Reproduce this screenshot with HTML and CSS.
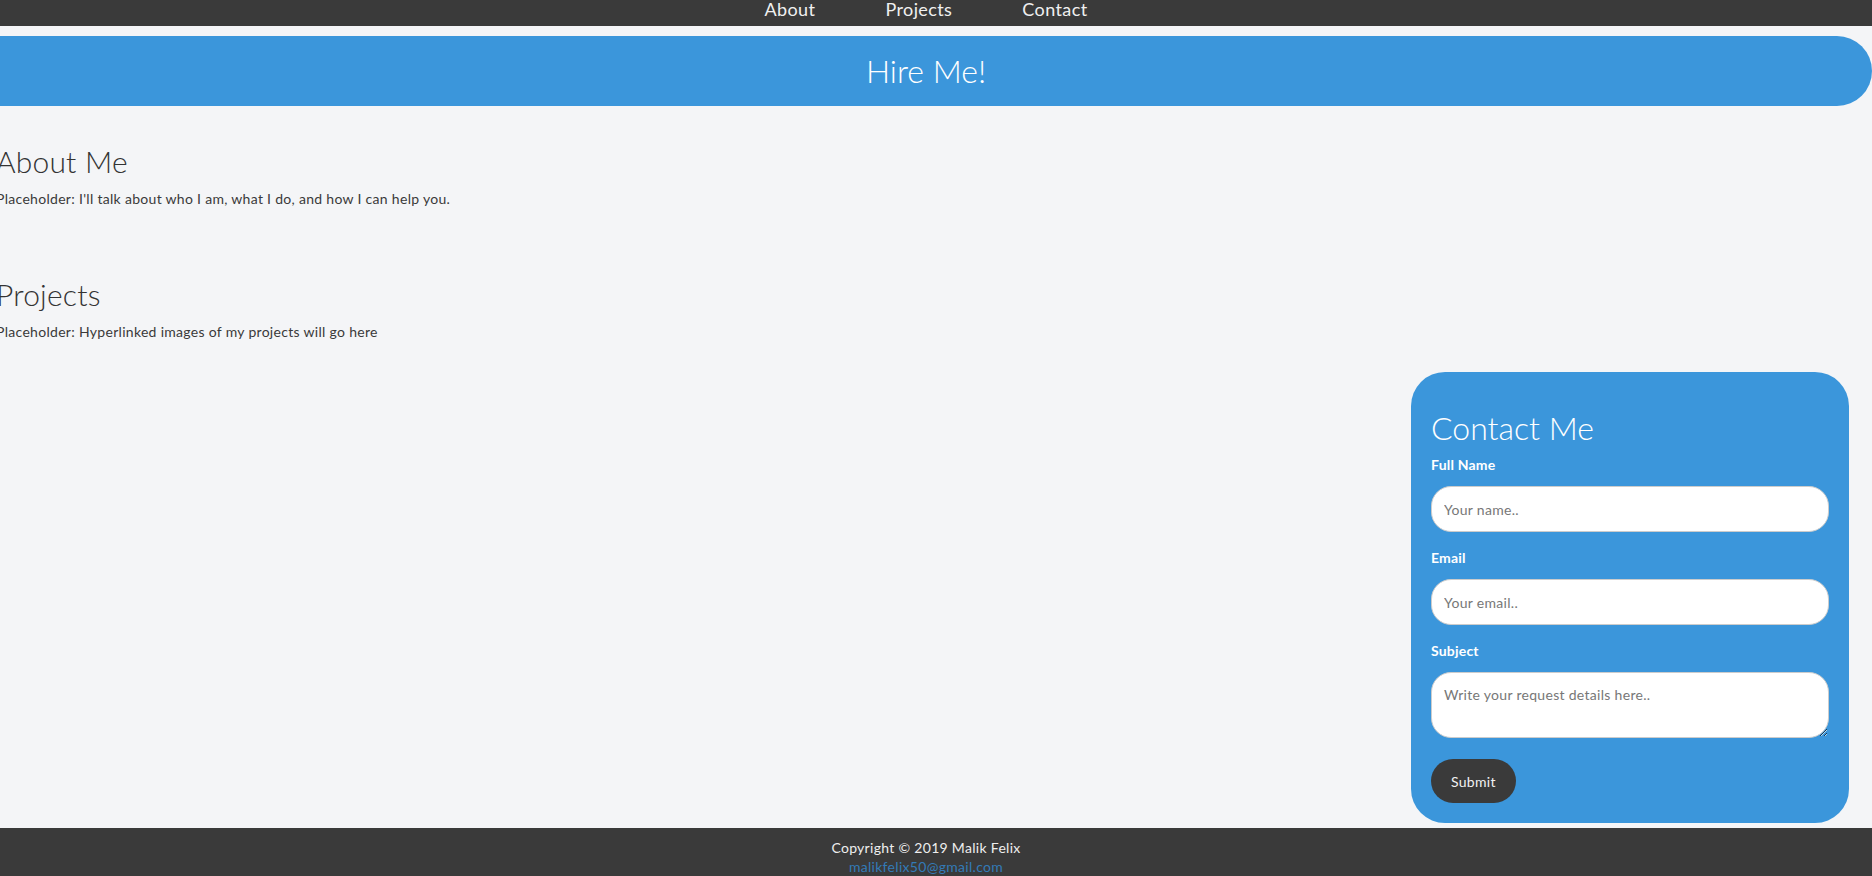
FILE: index.html
```html
<!DOCTYPE html>
<html lang="en">
<head>
<meta charset="utf-8">
<title>Malik Felix</title>
<link rel="stylesheet" href="styles.css">
</head>
<body>
<div class="page">
  <nav class="topnav">
    <a class="navlink" href="#about">About</a>
    <a class="navlink" href="#projects">Projects</a>
    <a class="navlink" href="#contact">Contact</a>
  </nav>
  <header class="hero">Hire Me!</header>
  <section class="section section-about" id="about">
    <h2 class="section-title">About Me</h2>
    <p class="section-text">Placeholder: I'll talk about who I am, what I do, and how I can help you.</p>
  </section>
  <section class="section section-projects" id="projects">
    <h2 class="section-title">Projects</h2>
    <p class="section-text">Placeholder: Hyperlinked images of my projects will go here</p>
  </section>
  <div class="contact-row" id="contact">
    <form class="contact-card">
      <h2 class="contact-title">Contact Me</h2>
      <label class="field-label" for="fname">Full Name</label>
      <input class="field-input" id="fname" type="text" placeholder="Your name..">
      <label class="field-label" for="email">Email</label>
      <input class="field-input" id="email" type="text" placeholder="Your email..">
      <label class="field-label" for="subject">Subject</label>
      <textarea class="field-area" id="subject" placeholder="Write your request details here.."></textarea>
      <button class="submit-btn" type="button">Submit</button>
    </form>
  </div>
  <footer class="footer">
    <div class="footer-line">Copyright © 2019 Malik Felix</div>
    <a class="footer-mail" href="#">malikfelix50@gmail.com</a>
  </footer>
</div>
</body>
</html>
```
FILE: styles.css
```css
html, body {
  margin: 0;
  padding: 0;
  background: #f4f5f7;
  overflow: hidden;
}
body {
  font-family: Lato, "Open Sans", sans-serif;
  color: #333;
}
.page {
  margin-left: -20px;
}
.topnav {
  height: 26px;
  background: #3a3a3a;
  display: flex;
  justify-content: center;
  align-items: flex-start;
}
.navlink {
  color: #f0f0f0;
  text-decoration: none;
  font-size: 18px;
  line-height: 18px;
  letter-spacing: 0.4px;
  padding: 0 35px;
  font-weight: 400;
}
.hero {
  margin-top: 10px;
  height: 70px;
  line-height: 70px;
  background: #3b96db;
  color: #fff;
  text-align: center;
  font-size: 32px;
  font-weight: 300;
  border-radius: 0 36px 36px 0;
}
.section {
  padding-left: 16px;
}
.section-about {
  padding-top: 37px;
}
.section-projects {
  padding-top: 67px;
}
.section-title {
  margin: 0;
  font-size: 30px;
  line-height: 36px;
  font-weight: 300;
  color: #333;
  letter-spacing: 0.2px;
}
.section-text {
  margin: 10px 0 0;
  font-size: 14px;
  line-height: 20px;
  letter-spacing: 0.3px;
  color: #3a3a3a;
}
.contact-row {
  display: flex;
  justify-content: flex-end;
  padding: 30px 23px 0 0;
}
.contact-card {
  width: 398px;
  padding: 37px 20px 20px;
  background: #3b96db;
  border-radius: 34px;
  color: #fff;
  display: flex;
  flex-direction: column;
  align-items: flex-start;
}
.contact-title {
  margin: 0 0 8px;
  font-size: 32px;
  line-height: 38px;
  font-weight: 300;
}
.field-label {
  font-size: 14px;
  line-height: 20px;
  font-weight: 700;
  letter-spacing: 0.2px;
  margin-bottom: 11px;
}
.field-input, .field-area {
  box-sizing: border-box;
  width: 398px;
  border: 1px solid #ccc;
  border-radius: 20px;
  background: #fff;
  font-family: inherit;
  font-size: 14px;
  letter-spacing: 0.3px;
  color: #333;
  padding: 0 12px;
  outline: none;
}
.field-input {
  height: 46px;
  margin-bottom: 16px;
}
.field-area {
  height: 66px;
  padding: 12px;
  line-height: 20px;
  resize: vertical;
  margin-bottom: 21px;
}
.field-input::placeholder, .field-area::placeholder {
  color: #777;
}
.submit-btn {
  height: 44px;
  padding: 0 20px;
  border: none;
  border-radius: 22px;
  background: #3a3a3a;
  color: #f2f2f2;
  font-family: inherit;
  font-size: 14px;
  letter-spacing: 0.3px;
}
.footer {
  margin-top: 5px;
  background: #3a3a3a;
  color: #eee;
  text-align: center;
  padding-top: 10px;
  font-size: 14px;
  line-height: 19px;
  letter-spacing: 0.3px;
  height: 60px;
}
.footer-mail {
  color: #337ab7;
  text-decoration: none;
}
```
